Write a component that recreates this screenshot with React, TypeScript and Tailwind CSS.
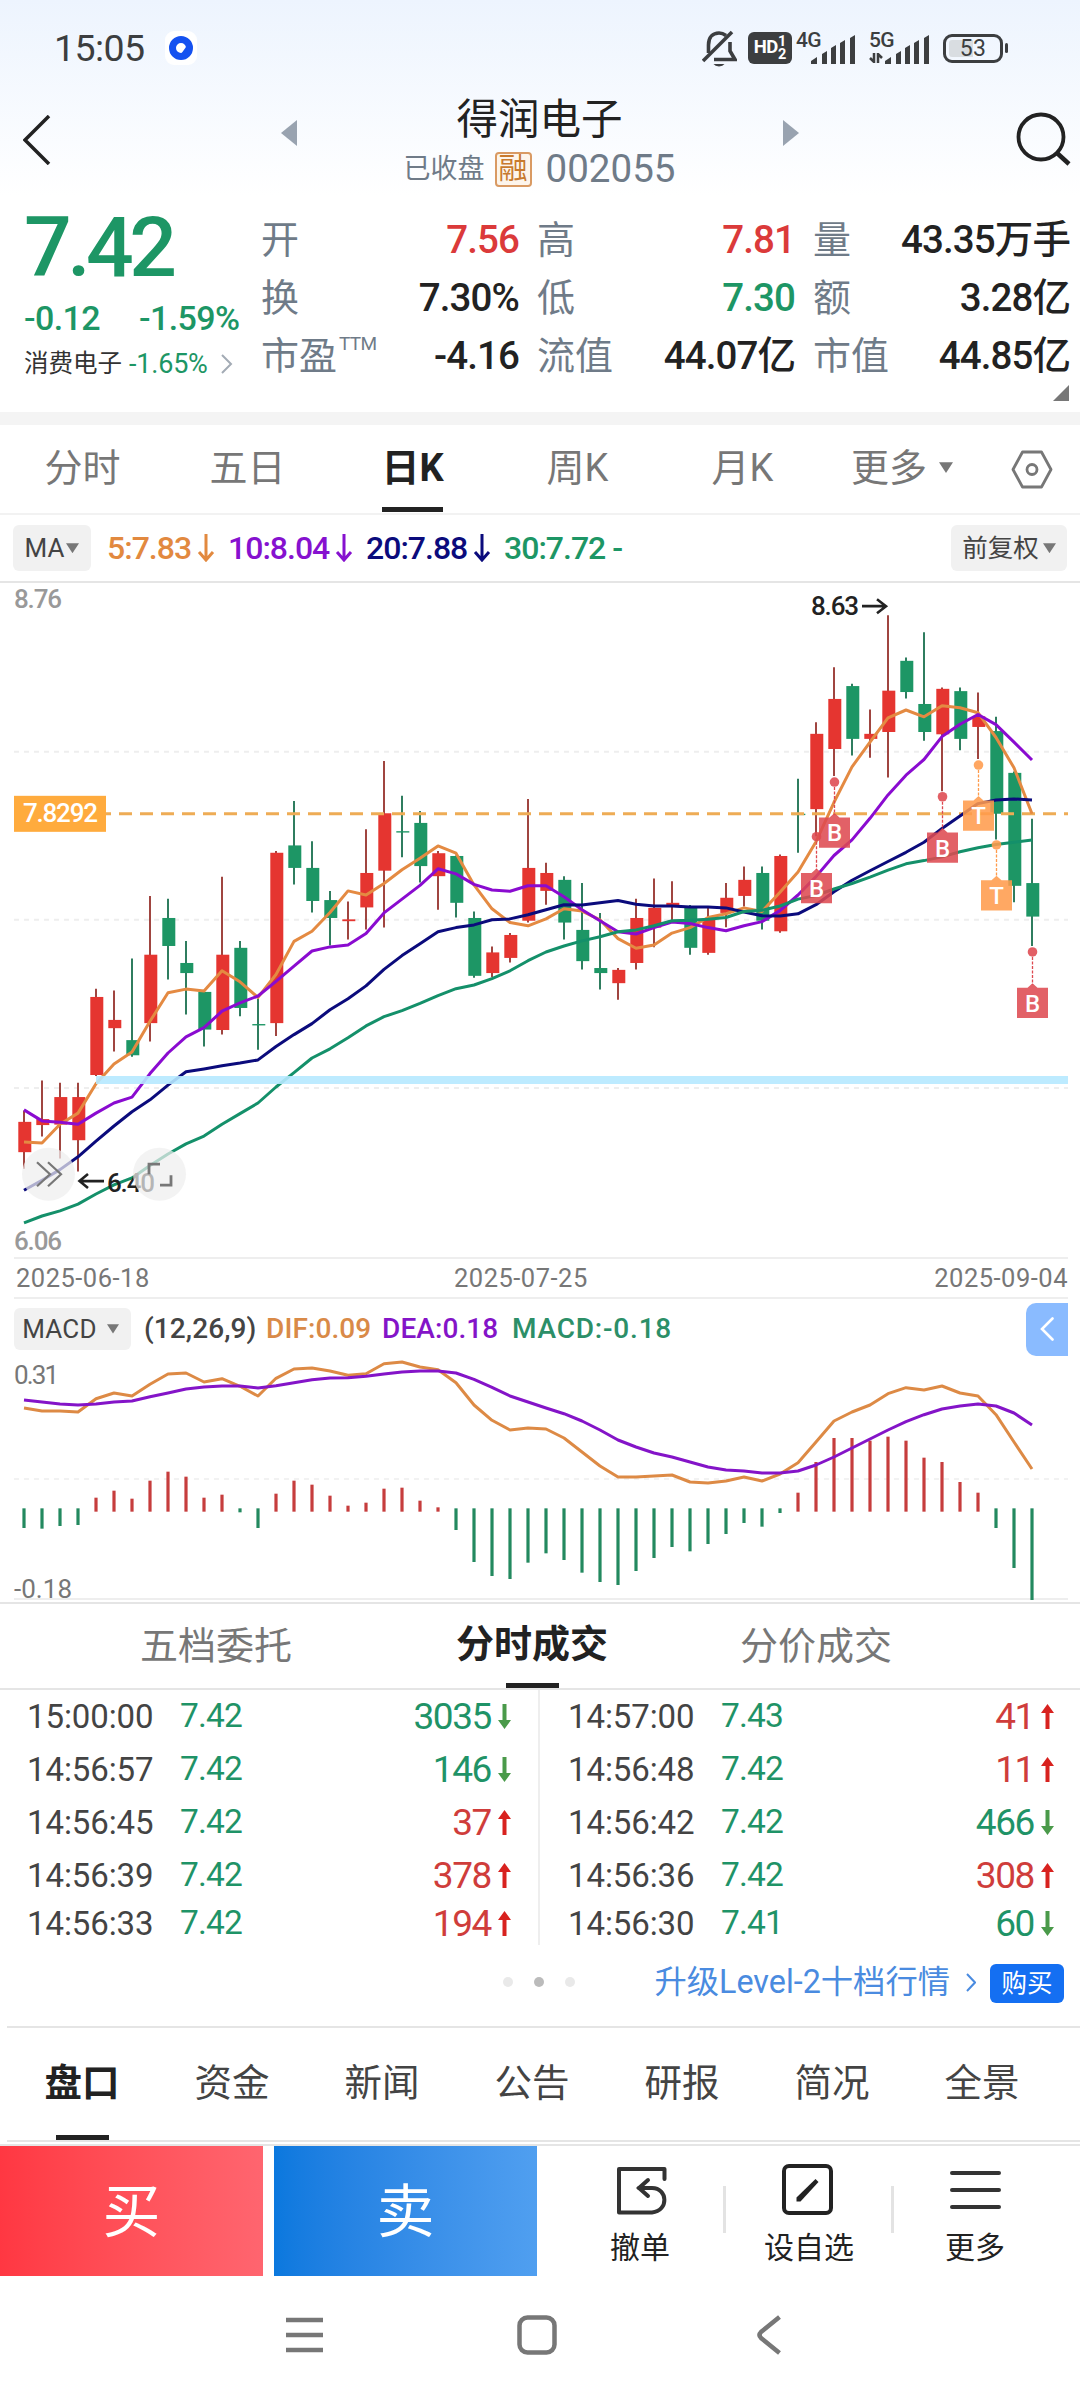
import React from "react";

type Side = "up" | "down";

// [high, bodyTop, bodyBottom, low, color]
type Candle = [number, number, number, number, "r" | "g"];

const STEP = 18;
const FIRST_X = 24;
const RED = "#e53530";
const GREEN = "#1d9665";

const xAt = (i: number) => FIRST_X + i * STEP;
const yAt = (level: number) => level * 0.4592 - 3;
const yMacd = (level: number) => level / 3 - 119;

const candles: Candle[] = [
  [1155, 1180, 1246, 1282, "r"], [1090, 1174, 1187, 1212, "r"], [1095, 1126, 1186, 1260, "r"],
  [1095, 1126, 1220, 1288, "r"], [890, 908, 1078, 1080, "r"], [894, 958, 976, 1027, "r"],
  [824, 1002, 1035, 1038, "g"], [688, 816, 965, 1005, "r"], [694, 736, 797, 870, "g"],
  [786, 834, 856, 946, "g"], [896, 897, 979, 1016, "g"], [646, 816, 980, 990, "r"],
  [786, 801, 932, 950, "g"], [912, 967, 970, 1023, "g"], [590, 594, 965, 993, "r"],
  [481, 578, 627, 663, "g"], [569, 627, 699, 724, "g"], [677, 697, 736, 796, "g"],
  [700, 739, 743, 783, "r"], [543, 638, 713, 761, "r"], [394, 508, 633, 757, "r"],
  [470, 547, 550, 604, "g"], [503, 529, 623, 659, "g"], [590, 595, 645, 718, "r"],
  [600, 601, 703, 735, "g"], [722, 736, 862, 866, "g"], [798, 811, 856, 865, "r"],
  [769, 773, 823, 833, "r"], [477, 627, 742, 746, "r"], [616, 638, 677, 707, "r"],
  [645, 653, 746, 783, "g"], [660, 762, 830, 848, "g"], [725, 845, 856, 892, "g"],
  [845, 849, 878, 914, "r"], [694, 736, 834, 848, "r"], [650, 714, 757, 800, "r"],
  [656, 703, 709, 745, "r"], [708, 713, 801, 816, "g"], [711, 740, 812, 816, "r"],
  [660, 692, 725, 756, "r"], [624, 653, 688, 711, "r"], [624, 638, 742, 761, "g"],
  [598, 601, 765, 768, "r"], [433, 509, 512, 594, "g"], [310, 335, 499, 558, "r"],
  [190, 259, 368, 427, "r"], [226, 231, 346, 382, "g"], [282, 335, 346, 387, "r"],
  [77, 241, 331, 430, "r"], [169, 176, 244, 258, "g"], [114, 270, 331, 350, "g"],
  [234, 237, 336, 460, "r"], [234, 242, 346, 371, "g"], [245, 297, 320, 390, "r"],
  [298, 329, 509, 565, "g"], [417, 420, 666, 702, "g"], [520, 660, 733, 797, "g"],
];

const ma5 = [
  1224, 1226, 1185, 1161, 1097, 1054, 1028, 961, 899, 891, 895, 851, 875, 909, 859, 787, 765, 724, 677,
  686, 661, 631, 606, 579, 595, 664, 716, 746, 753, 738, 716, 721, 740, 781, 802, 795, 769, 757, 735,
  727, 714, 722, 680, 636, 570, 484, 407, 353, 300, 283, 298, 274, 278, 289, 343, 409, 509,
];
const ma10 = [
  1154, 1178, 1181, 1185, 1161, 1139, 1126, 1075, 1030, 995, 975, 939, 921, 906, 874, 841, 808, 799, 795,
  770, 725, 695, 665, 629, 640, 663, 675, 678, 666, 666, 690, 718, 742, 766, 771, 757, 745, 748, 757,
  764, 753, 744, 720, 686, 646, 600, 566, 519, 468, 425, 391, 341, 314, 293, 315, 353, 392,
];
const ma20 = [
  1329, 1307, 1284, 1256, 1222, 1189, 1158, 1132, 1100, 1071, 1065, 1058, 1052, 1045, 1016, 990, 966, 936, 912,
  884, 848, 818, 792, 766, 757, 751, 740, 738, 729, 718, 707, 708, 703, 698, 706, 710, 710, 712, 712,
  714, 723, 731, 732, 727, 707, 679, 654, 633, 613, 593, 571, 541, 514, 487, 479, 477, 479,
];
const ma30 = [
  1400, 1385, 1374, 1359, 1337, 1317, 1302, 1275, 1250, 1228, 1211, 1185, 1162, 1139, 1104, 1073, 1041, 1021, 997,
  971, 951, 938, 922, 905, 890, 882, 868, 851, 829, 810, 797, 786, 777, 766, 762, 753, 742, 741, 739,
  735, 722, 719, 710, 695, 687, 673, 661, 647, 632, 618, 611, 603, 592, 583, 576, 571, 566,
];

const dif = [
  504, 513, 513, 516, 476, 459, 468, 433, 402, 399, 426, 416, 439, 468, 415, 387, 384, 393, 406,
  401, 371, 366, 381, 389, 428, 495, 541, 570, 564, 567, 594, 636, 678, 711, 711, 708, 705, 726,
  729, 723, 711, 723, 702, 668, 606, 543, 516, 495, 461, 443, 450, 438, 459, 468, 524, 606, 687,
];
const dea = [
  480, 486, 492, 495, 492, 486, 483, 470, 459, 447, 441, 438, 438, 444, 437, 428, 419, 414, 413,
  409, 402, 396, 393, 393, 399, 418, 442, 468, 486, 504, 521, 543, 570, 600, 621, 639, 651, 666,
  681, 690, 693, 699, 699, 693, 675, 651, 624, 597, 570, 545, 524, 507, 498, 492, 498, 519, 555,
];
const macd = [
  864, 866, 858, 855, 773, 752, 776, 722, 695, 710, 773, 764, 817, 864, 761, 722, 734, 767, 797,
  788, 746, 743, 782, 802, 870, 966, 1008, 1017, 968, 940, 960, 998, 1026, 1035, 993, 954, 921, 934,
  912, 882, 849, 860, 819, 758, 666, 594, 594, 602, 590, 602, 653, 666, 726, 758, 864, 984, 1080,
];

// candle index, dot level, flag level, letter
const flags: [number, number, number, "B" | "T"][] = [
  [45, 440, 517, "B"],
  [44, 559, 638, "B"],
  [51, 472, 550, "B"],
  [53, 403, 480, "T"],
  [54, 577, 654, "T"],
  [56, 810, 888, "B"],
];

const toPoints = (values: number[], y: (v: number) => number) =>
  values.map((v, i) => `${xAt(i)},${y(v).toFixed(1)}`).join(" ");

const trades: { time: string; price: string; vol: string; side: Side }[][] = [
  [
    { time: "15:00:00", price: "7.42", vol: "3035", side: "down" },
    { time: "14:56:57", price: "7.42", vol: "146", side: "down" },
    { time: "14:56:45", price: "7.42", vol: "37", side: "up" },
    { time: "14:56:39", price: "7.42", vol: "378", side: "up" },
    { time: "14:56:33", price: "7.42", vol: "194", side: "up" },
  ],
  [
    { time: "14:57:00", price: "7.43", vol: "41", side: "up" },
    { time: "14:56:48", price: "7.42", vol: "11", side: "up" },
    { time: "14:56:42", price: "7.42", vol: "466", side: "down" },
    { time: "14:56:36", price: "7.42", vol: "308", side: "up" },
    { time: "14:56:30", price: "7.41", vol: "60", side: "down" },
  ],
];

const Caret: React.FC<{ size?: number }> = ({ size = 13 }) => (
  <svg width={size} height={size * 0.8} viewBox="0 0 13 10" fill="#777">
    <path d="M0 0h13L6.5 10z" />
  </svg>
);

const Signal: React.FC = () => (
  <svg width="45" height="29" viewBox="0 0 45 29" fill="#3c3e40">
    <path d="M0 29v-3l6-4v7zM11 29v-10l5-3v13zM20 29v-16l5-3v19zM29 29v-21l5-3v24zM39 29v-26l5-3v29z" />
  </svg>
);

const StatusBar: React.FC = () => (
  <div className="flex h-24 items-center pl-[54px] text-[#3c3e40]">
    <span className="w-[111px] text-[37.5px] tracking-[-0.6px]">15:05</span>
    <svg width="32" height="34" viewBox="0 0 32 34">
      <rect width="32" height="34" rx="9" fill="#fff" />
      <circle cx="16" cy="17" r="8.5" fill="none" stroke="#1451f0" strokeWidth="7" />
      <path d="M16 23l7 0-2-7z" fill="#1451f0" />
    </svg>
    <svg className="ml-[505px]" width="35" height="37" viewBox="0 0 35 37" fill="none" stroke="#3c3e40" strokeWidth="3.6">
      <path d="M1 31L30 2" />
      <path d="M6.5 23V15C6.5 7 11 3 17 3c3 0 5 1 7 2.500M28 12v9l5 8.500H12" />
      <path d="M11.500 34h11a6 4 0 0 1-11 0z" fill="#3c3e40" stroke="none" />
    </svg>
    <div className="ml-[11px] flex h-8 w-11 items-center justify-center rounded-md bg-[#3c3e40] text-white">
      <span className="text-[18.5px] font-bold tracking-[-0.5px]">HD</span>
      <span className="flex flex-col text-[14.5px] leading-[13px] font-bold">
        <span>1</span>
        <span>2</span>
      </span>
    </div>
    <div className="ml-1 flex h-8 w-[61px]">
      <span className="w-[15px] text-[21px] leading-4 font-medium tracking-[-0.7px]">4G</span>
      <div className="mt-[3px]">
        <Signal />
      </div>
    </div>
    <div className="ml-3 flex h-8 w-[61px]">
      <div className="w-4">
        <span className="block w-7 text-[21px] leading-4 font-medium tracking-[-0.7px]">5G</span>
        <svg className="mt-[5px]" width="14" height="10" viewBox="0 0 14 10" stroke="#3c3e40" strokeWidth="2.500" fill="none">
          <path d="M5 0v9L1 5M9 10V1l4 4" />
        </svg>
      </div>
      <div className="mt-[3px]">
        <Signal />
      </div>
    </div>
    <div className="ml-[13px] flex h-[29px] w-[60px] items-center justify-center rounded-[9px] border-[3px] border-[#3c3e40] bg-[linear-gradient(90deg,#d9dde1_50%,transparent_50%)] bg-clip-content p-[3px]">
      <span className="text-[23px] leading-none tracking-[0.2px]">53</span>
    </div>
    <div className="ml-0.5 h-2.5 w-[3px] rounded-full bg-[#3c3e40]" />
  </div>
);

const TitleBar: React.FC = () => (
  <div className="flex h-[100px] items-start text-[#222]">
    <svg className="mt-[19px] ml-[23px]" width="28" height="50" viewBox="0 0 28 50" fill="none" stroke="#222" strokeWidth="3.500">
      <path d="M26 1L2 25l24 24" />
    </svg>
    <svg className="mt-6 ml-[230px]" width="16" height="26" viewBox="0 0 16 26" fill="#99a3b0">
      <path d="M16 0v26L0 13z" />
    </svg>
    <div className="ml-[86px] flex w-[313px] flex-col items-center">
      <h1 className="text-[41.5px] leading-[48px]">得润电子</h1>
      <div className="flex h-[50px] items-center text-[#6f7b88]">
        <span className="text-[27px]">已收盘</span>
        <span className="ml-2.5 flex h-[35px] w-[37px] items-center justify-center rounded-sm border-2 border-[#d99a63] bg-[#fdf5ec] text-[29px] leading-none text-[#c87a2e]">
          融
        </span>
        <span className="ml-3.5 text-[38.5px] leading-none">002055</span>
      </div>
    </div>
    <svg className="mt-6 ml-[87px]" width="16" height="26" viewBox="0 0 16 26" fill="#99a3b0">
      <path d="M0 0v26l16-13z" />
    </svg>
    <svg className="mt-[15px] ml-[215px]" width="58" height="56" viewBox="0 0 58 56" fill="none" stroke="#222" strokeWidth="3.800">
      <circle cx="27" cy="26" r="22.500" />
      <path d="M43 42l12 11" strokeWidth="4.500" />
    </svg>
  </div>
);

const quoteColumns: { width: string; rows: { label: string; sup?: string; value: string; color: string }[] }[] = [
  {
    width: "w-[258px]",
    rows: [
      { label: "开", value: "7.56", color: "text-[#db3a3a]" },
      { label: "换", value: "7.30%", color: "text-[#222]" },
      { label: "市盈", sup: "TTM", value: "-4.16", color: "text-[#222]" },
    ],
  },
  {
    width: "w-[258px]",
    rows: [
      { label: "高", value: "7.81", color: "text-[#db3a3a]" },
      { label: "低", value: "7.30", color: "text-[#1d9665]" },
      { label: "流值", value: "44.07亿", color: "text-[#222]" },
    ],
  },
  {
    width: "w-[257px]",
    rows: [
      { label: "量", value: "43.35万手", color: "text-[#222]" },
      { label: "额", value: "3.28亿", color: "text-[#222]" },
      { label: "市值", value: "44.85亿", color: "text-[#222]" },
    ],
  },
];

const Quote: React.FC = () => (
  <div className="h-[216px]">
    <div className="flex h-[189px] items-start">
      <div className="w-[261px] pl-6 text-[#1d9665]">
        <p className="pt-[11px] text-[84px] leading-[82px] font-medium tracking-[-4.5px]">7.42</p>
        <p className="mt-[7px] flex text-[34px] leading-[44px] font-medium tracking-[-0.6px]">
          <span className="w-[115px]">-0.12</span>
          <span>-1.59%</span>
        </p>
        <p className="mt-[4px] flex items-center text-[25px] leading-10">
          <span className="text-[24.5px] text-[#333]">消费电子</span>
          <span className="ml-[7px] text-[27px] tracking-[-0.2px]">-1.65%</span>
          <svg className="ml-3" width="13" height="20" viewBox="0 0 13 20" fill="none" stroke="#a3abb5" strokeWidth="2">
            <path d="M2 1l9 9-9 9" />
          </svg>
        </p>
      </div>
      <div className="flex gap-[18px] pt-[15px]">
        {quoteColumns.map((col, i) => (
          <div key={i} className={col.width}>
            {col.rows.map((row) => (
              <div key={row.label} className="flex h-[58px] items-center justify-between whitespace-nowrap">
                <span className="flex text-[38px] leading-none text-[#6f7b88]">
                  {row.label}
                  {row.sup && <sup className="top-[-3px] ml-0.5 text-[19px] leading-none tracking-[-0.7px]">{row.sup}</sup>}
                </span>
                <span className={`text-[38.5px] leading-none font-medium tracking-[-0.9px] ${row.color}`}>{row.value}</span>
              </div>
            ))}
          </div>
        ))}
      </div>
    </div>
    <svg className="ml-[1053px]" width="16" height="16" viewBox="0 0 16 16" fill="#777">
      <path d="M16 0v16H0z" />
    </svg>
  </div>
);

const PeriodTabs: React.FC = () => (
  <div className="flex h-[88px] text-[38px] text-[#777]">
    {["分时", "五日", "日K", "周K", "月K"].map((tab) => (
      <div
        key={tab}
        className={`flex w-[165px] flex-col items-center ${tab === "日K" ? "font-bold text-[#222]" : ""}`}
      >
        <span className="flex h-[82px] items-center pt-1">{tab}</span>
        {tab === "日K" && <span className="h-[5px] w-[61px] bg-[#222]" />}
      </div>
    ))}
    <div className="ml-[26px] flex h-[82px] items-center pt-1">
      更多
      <span className="ml-3">
        <Caret size={14} />
      </span>
    </div>
    <svg className="mt-[25px] ml-[58px]" width="42" height="39" viewBox="0 0 42 39" fill="none" stroke="#777" strokeWidth="2.800">
      <path d="M11.500 2h19L40 19.500 30.500 37h-19L2 19.500z" strokeLinejoin="round" />
      <circle cx="21" cy="19.500" r="5" />
    </svg>
  </div>
);

const MaBar: React.FC = () => (
  <div className="flex h-[70px] items-center border-t-2 border-b-2 border-t-[#f2f2f2] border-b-[#e5e5e5] pr-[13px] pl-[13px]">
    <div className="flex h-[46px] w-[78px] items-center justify-center gap-0.5 rounded-md bg-[#f1f1f1] text-[26px] text-[#444]">
      MA
      <Caret />
    </div>
    <div className="ml-[16px] flex text-[32px] font-medium tracking-[-1px] whitespace-nowrap">
      <span className="flex w-[121px] items-center text-[#e2893f]">5:7.83<DownArrow /></span>
      <span className="flex w-[138px] items-center text-[#8611cf]">10:8.04<DownArrow /></span>
      <span className="flex w-[138px] items-center text-[#0b0b7c]">20:7.88<DownArrow /></span>
      <span className="text-[#1d9665]">30:7.72 -</span>
    </div>
    <div className="ml-auto flex h-[46px] w-[116px] items-center justify-center gap-1 rounded-md bg-[#f1f1f1] text-[25.5px] text-[#444]">
      前复权
      <Caret />
    </div>
  </div>
);

const DownArrow: React.FC = () => (
  <svg className="ml-1.5" width="18" height="28" viewBox="0 0 18 28" fill="none" stroke="currentColor" strokeWidth="3">
    <path d="M9 0v26M2 18l7 8 7-8" />
  </svg>
);

const KChart: React.FC = () => (
  <svg className="block" width="1080" height="674" viewBox="0 0 1080 674" fontFamily="Roboto, sans-serif">
    {[374, 740, 1106].map((level) => (
      <path key={level} d={`M14 ${yAt(level)}H1068`} stroke="#eeeeee" strokeWidth="2" strokeDasharray="5 5" />
    ))}
    <text x="14" y="25" fontSize="26" fontWeight="500" fill="#999" textLength="48">8.76</text>
    <text x="14" y="667" fontSize="26" fontWeight="500" fill="#999" textLength="48">6.06</text>

    {candles.map(([high, top, bottom, low, color], i) => (
      <g key={i}>
        <path d={`M${xAt(i)} ${yAt(high)}V${yAt(low)}`} stroke={color === "r" ? "#a04540" : "#2f7d5f"} strokeWidth="2" />
        <rect x={xAt(i) - 5.7} y={yAt(top)} width="13" height={yAt(bottom) - yAt(top)} fill={color === "r" ? RED : GREEN} />
      </g>
    ))}

    <path d={`M106 ${yAt(509)}H1068`} stroke="#eeac55" strokeWidth="3" strokeDasharray="13 8" strokeDashoffset="8" />

    <g fill="none" strokeWidth="3" strokeLinejoin="round">
      <polyline points={toPoints(ma5, yAt)} stroke="#e48a42" />
      <polyline points={toPoints(ma10, yAt)} stroke="#8a0bd0" />
      <polyline points={toPoints(ma20, yAt)} stroke="#0b0b7c" />
      <polyline points={toPoints(ma30, yAt)} stroke="#14906a" />
    </g>
    <path d={`M96 ${yAt(1089)}H1068`} stroke="#b6e9ff" strokeOpacity="0.9" strokeWidth="8" />

    <rect x="14" y={yAt(470)} width="92" height="36" fill="#ffab3d" />
    <text x="23" y={yAt(527)} fontSize="26" fontWeight="500" fill="#fff" textLength="75">7.8292</text>

    {flags.map(([i, dot, top, letter]) => {
      const x = xAt(i) + 0.5;
      const y = yAt(top);
      const fill = letter === "B" ? "#de4950" : "#ff9b4c";
      return (
        <g key={i}>
          <path d={`M${x} ${yAt(dot) + 5}V${y - 3}`} stroke={fill} strokeWidth="1.300" strokeDasharray="3 1.500" />
          <circle cx={x} cy={yAt(dot)} r="4.800" fill={fill} fillOpacity="0.88" />
          <path
            d={`M${x - 15.500} ${y}H${x - 5}L${x} ${y - 4.500}L${x + 5} ${y}H${x + 15.500}V${y + 30.300}H${x - 15.500}Z`}
            fill={fill}
            fillOpacity="0.87"
          />
          <text x={x} y={y + 24} fontSize="24" fontWeight="500" fill="#fff" textAnchor="middle">{letter}</text>
        </g>
      );
    })}

    <g fill="none" stroke="#222" strokeWidth="2.600">
      <path d={`M862 ${yAt(57)}H886M877 ${yAt(57) - 7}l9 7-9 7`} />
      <path d={`M104 ${yAt(1309)}H80M88 ${yAt(1309) - 7}l-8.500 7 8.500 7`} />
    </g>
    <text x="811" y={yAt(76)} fontSize="26" fontWeight="500" fill="#222" textLength="48">8.63</text>
    <text x="107" y={yAt(1332)} fontSize="26" fontWeight="500" fill="#222" textLength="48">6.40</text>

    <g fill="#efefef" fillOpacity="0.72">
      <circle cx="48.500" cy={yAt(1294)} r="26.500" />
      <circle cx="159.500" cy={yAt(1294)} r="26.500" />
    </g>
    <g fill="none" stroke="#777" strokeWidth="2.200">
      <path d={`M37 ${yAt(1294) - 12}l13 12-13 12M48 ${yAt(1294) - 12}l13 12-13 12`} />
      <path d={`M149 ${yAt(1294)}v-10h11M160 ${yAt(1294) + 11}h11v-10`} strokeWidth="2.800" />
    </g>
  </svg>
);

const MacdPanel: React.FC = () => (
  <div>
    <div className="flex h-[60px] items-center pl-3.5 text-[28px] tracking-[0.1px] whitespace-nowrap">
      <div className="flex h-[42px] w-[117px] items-center justify-center gap-2.5 rounded-md bg-[#f1f1f1] pr-1 text-[26px] tracking-[0.2px] text-[#444]">
        MACD
        <Caret size={12} />
      </div>
      <span className="ml-[13px] w-[122px] font-medium text-[#444]">(12,26,9)</span>
      <span className="w-[116px] font-medium text-[#d98a48]">DIF:0.09</span>
      <span className="w-[130px] font-medium text-[#8414c8]">DEA:0.18</span>
      <span className="font-medium tracking-[0.8px] text-[#2c8f68]">MACD:-0.18</span>
      <div className="mr-3 ml-auto flex h-[53px] w-[42px] items-center justify-center rounded-l-[10px] bg-[#8abbff]">
        <svg width="14" height="24" viewBox="0 0 14 24" fill="none" stroke="#fff" strokeWidth="2.600" strokeLinecap="round">
          <path d="M12.500 1.500L2 12l10.500 10.500" />
        </svg>
      </div>
    </div>
    <svg className="block overflow-visible" width="1080" height="243" viewBox="0 0 1080 243" fontFamily="Roboto, sans-serif">
      <path d="M14 120H1068" stroke="#eee" strokeWidth="1.500" strokeDasharray="5 5" />
      <path d="M14 240H1068" stroke="#eee" strokeWidth="2" />
      <text x="14" y="25" fontSize="26" fill="#777" textLength="45">0.31</text>
      <text x="14" y="239" fontSize="26" fill="#777" textLength="58">-0.18</text>
      {macd.map((v, i) => (
        <path
          key={i}
          d={v > 810 ? `M${xAt(i)} ${yMacd(805)}V${yMacd(v)}` : `M${xAt(i)} ${yMacd(815)}V${yMacd(v)}`}
          stroke={v > 810 ? "#23895f" : "#c63d3d"}
          strokeWidth="3.200"
        />
      ))}
      <g fill="none" strokeWidth="3" strokeLinejoin="round">
        <polyline points={toPoints(dif, yMacd)} stroke="#dd8a45" />
        <polyline points={toPoints(dea, yMacd)} stroke="#8414c8" />
      </g>
    </svg>
  </div>
);

const TradeArrow: React.FC<{ side: Side }> = ({ side }) => (
  <svg className="ml-[7px]" width="13" height="25" viewBox="0 0 13 25" fill={side === "up" ? "#d8221f" : "#4a9a4a"}>
    {side === "up" ? <path d="M6.500 0L13 9H8.500v16h-4V9H0z" /> : <path d="M6.500 25L13 16H8.500V0h-4v16H0z" />}
  </svg>
);

const Trades: React.FC = () => (
  <div>
    <div className="flex h-[88px] border-t-2 border-b-2 border-[#e5e5e5] text-[38px] text-[#777]">
      <div className="ml-[140px] flex h-[82px] w-[152px] items-center pt-0.5 whitespace-nowrap">五档委托</div>
      <div className="ml-[164px] flex w-[152px] flex-col items-center font-bold whitespace-nowrap text-[#222]">
        <span className="flex h-[82px] items-center pt-0.5">分时成交</span>
        <span className="h-[5px] w-[53px] shrink-0 bg-[#222]" />
      </div>
      <div className="ml-[132px] flex h-[82px] items-center pt-0.5 whitespace-nowrap">分价成交</div>
    </div>
    <div className="flex h-[255px]">
      {trades.map((list, side) => (
        <div
          key={side}
          className={side === 0 ? "h-full w-[540px] border-r-2 border-[#eeeeee] pr-[27px] pl-[27px]" : "h-full flex-1 pr-[26px] pl-[28px]"}
        >
          {list.map((t, i) => (
            <div key={t.time} className={`flex items-center ${i === 4 ? "h-[43px]" : "h-[53px]"}`}>
              <span className="w-[153px] text-[33px] tracking-[-0.1px] text-[#444]">{t.time}</span>
              <span className="flex-1 text-[33.5px] tracking-[-0.8px] text-[#1f9367]">{t.price}</span>
              <span className={`text-[37px] tracking-[-1.4px] ${t.side === "up" ? "text-[#cf3d3b]" : "text-[#1f9367]"}`}>{t.vol}</span>
              <TradeArrow side={t.side} />
            </div>
          ))}
        </div>
      ))}
    </div>
    <div className="flex h-[81px] items-center pb-1.5">
      <div className="mt-[-2px] ml-[503px] flex gap-[21px]">
        <span className="size-2.5 rounded-full bg-[#e9e9e9]" />
        <span className="size-2.5 rounded-full bg-[#bbb]" />
        <span className="size-2.5 rounded-full bg-[#e9e9e9]" />
      </div>
      <div className="mr-4 ml-auto flex items-center whitespace-nowrap text-[#4a8be0]">
        <span className="text-[32.3px]">升级Level-2十档行情</span>
        <svg className="mr-3.5 ml-4" width="10" height="19" viewBox="0 0 10 19" fill="none" stroke="#4a8be0" strokeWidth="2">
          <path d="M1 1l8 8.500L1 18" />
        </svg>
        <span className="mt-0.5 flex h-[39px] w-[74px] items-center justify-center rounded-md bg-[#146ff2] text-[25.5px] text-white">购买</span>
      </div>
    </div>
  </div>
);

const InfoTabs: React.FC = () => (
  <div className="ml-[7px] flex h-[116px] border-t-2 border-b-2 border-[#e5e5e5] text-[37.500px] text-[#444]">
    {["盘口", "资金", "新闻", "公告", "研报", "简况", "全景"].map((tab, i) => (
      <div key={tab} className={`flex w-[150px] flex-col items-center ${i === 0 ? "font-bold text-[#222]" : ""}`}>
        <span className="flex h-[108px] items-center pt-[3px]">{tab}</span>
        {i === 0 && <span className="h-[5px] w-[53px] shrink-0 bg-[#222]" />}
      </div>
    ))}
  </div>
);

const ActionBar: React.FC = () => (
  <div className="mt-0.5 flex h-[132px] border-t-2 border-[#e5e5e5] text-[30px] text-[#222]">
    <button className="flex w-[263px] items-center justify-center bg-linear-to-r from-[#ff3742] to-[#ff656f] pt-0.5 text-[58px] text-white">买</button>
    <button className="ml-[11px] flex w-[263px] items-center justify-center bg-linear-to-r from-[#0a78de] to-[#509ff0] pt-0.5 text-[58px] text-white">卖</button>
    <div className="ml-[42px] flex w-[122px] flex-col items-center pt-[21px]">
      <svg className="ml-[3px]" width="50" height="50" viewBox="0 0 50 50" fill="none" stroke="#333" strokeWidth="4" strokeLinecap="round">
        <path d="M47.500 12V2H2v43.500H35C52 44 51 21 35 21H22" strokeLinejoin="round" />
        <path d="M31 13l-9 8 9 8" />
      </svg>
      <span className="mt-1.5 leading-[50px]">撤单</span>
    </div>
    <div className="mt-10 ml-[22px] h-[47px] w-[3px] bg-[#e3e3e3]" />
    <div className="ml-[19px] flex w-[128px] flex-col items-center pt-[18px]">
      <svg className="mr-1" width="51" height="51" viewBox="0 0 51 51" fill="none" stroke="#222" strokeWidth="4">
        <rect x="2" y="2" width="47" height="47" rx="5" />
        <path d="M14.500 37.500v-4L33.500 15l3 3-18 19.500z" fill="#222" stroke="none" />
      </svg>
      <span className="mt-2 leading-[50px]">设自选</span>
    </div>
    <div className="mt-10 ml-[18px] h-[47px] w-[3px] bg-[#e3e3e3]" />
    <div className="ml-[17px] flex w-[128px] flex-col items-center pt-[24px]">
      <svg width="51" height="40" viewBox="0 0 51 40" stroke="#333" strokeWidth="4" strokeLinecap="round">
        <path d="M2 3h47M2 20h47M2 37h47" />
      </svg>
      <span className="mt-[13px] leading-[50px]">更多</span>
    </div>
  </div>
);

const NavBar: React.FC = () => (
  <div className="flex h-[117px] items-center pl-[286px] text-[#777]">
    <svg width="37" height="36" viewBox="0 0 37 36" stroke="currentColor" strokeWidth="4.500">
      <path d="M0 3h37M0 18h37M0 33h37" />
    </svg>
    <svg className="ml-[194px]" width="40" height="40" viewBox="0 0 40 40" fill="none" stroke="currentColor" strokeWidth="4.500">
      <rect x="2.500" y="2.500" width="35" height="35" rx="8" />
    </svg>
    <svg className="ml-[199px]" width="26" height="40" viewBox="0 0 26 40" fill="none" stroke="currentColor" strokeWidth="4.500">
      <path d="M23.500 2L5 17q-3 3 0 6l18.500 15" />
    </svg>
  </div>
);

const App: React.FC = () => {
  return (
    <div className="h-[2400px] w-[1080px] overflow-hidden bg-white font-[Roboto,'Noto_Sans_CJK_SC',sans-serif]">
      <div className="bg-linear-to-b from-[#edf4fe] to-white">
        <StatusBar />
        <TitleBar />
      </div>
      <Quote />
      <div className="h-[13px] bg-[#f4f4f4]" />
      <PeriodTabs />
      <MaBar />
      <KChart />
      {/* fechas del eje X */}
      <div className="mr-3 ml-3.5 flex h-[42px] items-center border-t-2 border-b-2 border-[#eeeeee] text-[25.5px] tracking-[0.5px] text-[#777]">
        <span className="ml-0.5 w-[438px]">2025-06-18</span>
        <span>2025-07-25</span>
        <span className="ml-auto">2025-09-04</span>
      </div>
      <MacdPanel />
      <Trades />
      <InfoTabs />
      <ActionBar />
      <NavBar />
    </div>
  );
};

export default App;
